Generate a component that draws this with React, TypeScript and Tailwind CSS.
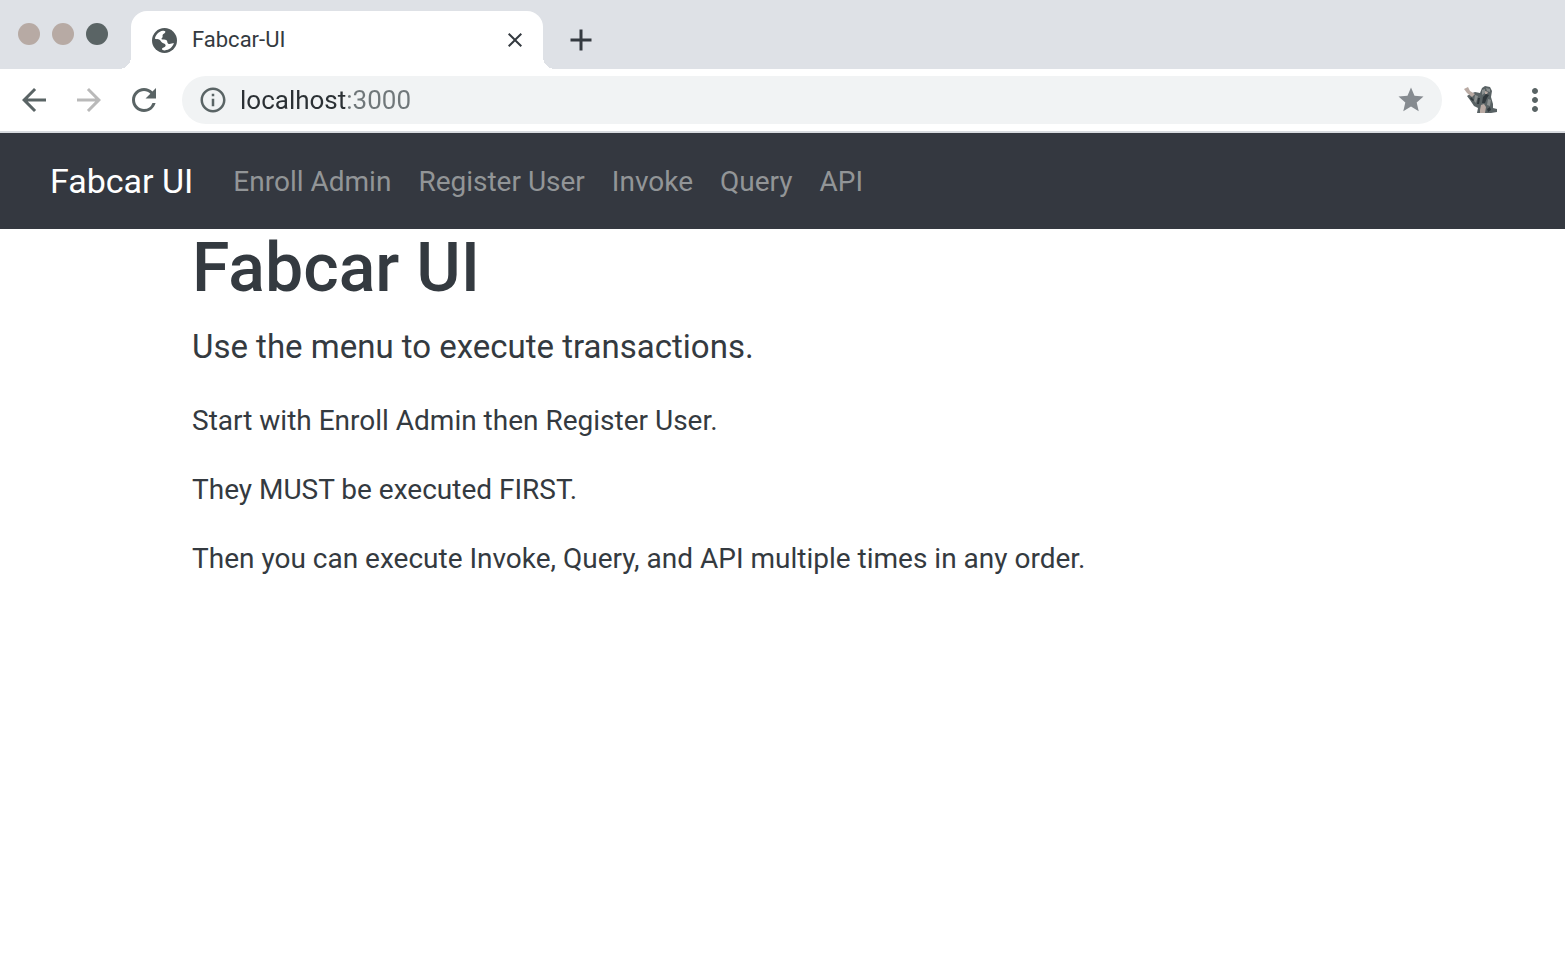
import {
  MdAdd,
  MdArrowBack,
  MdArrowForward,
  MdClose,
  MdInfoOutline,
  MdMoreVert,
  MdRefresh,
  MdStar,
} from "react-icons/md";

const links = ["Enroll Admin", "Register User", "Invoke", "Query", "API"];

function Globe() {
  return (
    <svg viewBox="0 0 24 24" className="size-[25px]" aria-hidden="true">
      <circle cx="12" cy="12" r="12" fill="#4f5759" />
      <path
        fill="#fff"
        d="M2.800 10.300C3.300 6.500 6.500 3.200 10.500 2.600 12.500 2.400 13.300 3.200 12.600 4.400 12 5.400 10.600 5.600 10.200 6.800 9.900 8 10.700 8.300 9.800 9.300 9.300 9.900 8.700 10.100 9.200 10.700 10.200 11.300 12.800 10.700 14 11.700 15.200 12.900 14.300 14.300 15.600 15.100 17.200 15.900 19.300 14.700 21 14.500 20 18.500 16.300 21.300 12.200 21.500 10.600 21.500 9.400 21 9.600 20 9.900 18.600 12.300 18.800 13 17.300 13.600 15.700 11.800 14.700 10.300 14.300 8.700 13.800 8.600 12.200 7.200 11.300 5.800 10.500 4.300 10.800 2.800 10.300z"
      />
    </svg>
  );
}

function ExtensionIcon() {
  return (
    <svg viewBox="0 0 34 30" className="h-[30px] w-[34px]" aria-hidden="true">
      <path fill="#596264" d="M7 9l5-2 5 1 2-5 3-2 5 1 2 4-1 6 2 7 0 4 4 1 0 3-6 1H14l1-5-4-2-4-6-3-4z" />
      <path fill="#b9aaa3" d="M1 4l4-2 2 4 5 3-3 3-5-4z" />
      <path fill="#8b9090" d="M12 10l3 1-2 7-2-2zM19 5l3-1 0 4-3 2zM23 3l4 1 0 3-3-1zM25 14l3 1-1 6-3-1z" />
      <path fill="#30383c" d="M15 13l2 0-1 6-2 0zM20 12l3-3 3 1-2 3-2 5-3 0zM24 24l3-2 1 3-3 2zM8 12l3 3-1 1-3-2z" />
      <path fill="#b9aaa3" d="M18 20l3-1 2 3-1 6h-5l0-3zM22 6l3 1-1 2-2 0z" />
    </svg>
  );
}

export default function App() {
  return (
    <div className="flex min-h-screen flex-col bg-white font-['Roboto',sans-serif] text-[#343a40]">
      <div className="flex h-[69px] items-end bg-[#dee1e6]">
        <div className="flex h-full w-[131px] shrink-0 gap-3 pt-[23px] pl-[18px]">
          <button aria-label="Close window" className="size-[22px] rounded-full bg-[#b7aaa4]" />
          <button aria-label="Minimize window" className="size-[22px] rounded-full bg-[#b7aaa4]" />
          <button aria-label="Zoom window" className="size-[22px] rounded-full bg-[#5a6465]" />
        </div>
        <div className="relative flex h-[58px] w-[412px] items-center rounded-t-2xl bg-white pr-4 pl-[21px]">
          <span className="absolute bottom-0 -left-3 size-3 bg-[radial-gradient(circle_at_0_0,#dee1e6_12px,#fff_12px)]" />
          <span className="absolute -right-3 bottom-0 size-3 bg-[radial-gradient(circle_at_100%_0,#dee1e6_12px,#fff_12px)]" />
          <Globe />
          <span className="ml-[15px] flex-1 text-[22px] leading-8">Fabcar-UI</span>
          <button aria-label="Close tab"><MdClose className="size-6" /></button>
        </div>
        <button aria-label="New tab" className="ml-5 flex h-[58px] items-center">
          <MdAdd className="size-9" />
        </button>
      </div>
      <div className="flex h-16 items-center border-b-2 border-[#d7dadf] pr-3 pl-4 text-[#5a6465]">
        <div className="flex gap-[19px]">
          <button aria-label="Back"><MdArrowBack className="size-9" /></button>
          <button aria-label="Forward" className="text-[#b9b9b9]"><MdArrowForward className="size-9" /></button>
          <button aria-label="Reload"><MdRefresh className="size-9" /></button>
        </div>
        <div className="ml-5 flex h-12 flex-1 items-center rounded-full bg-[#f1f3f4] px-4">
          <MdInfoOutline className="size-[30px]" />
          <input
            aria-label="Address"
            defaultValue="localhost:3000"
            className="ml-3 h-10 min-w-0 flex-1 bg-[linear-gradient(90deg,#2b3034_106px,#70777a_106px)] bg-clip-text text-[26px] text-transparent caret-[#2b3034] outline-none"
          />
          <button aria-label="Bookmark" className="text-[#868b90]"><MdStar className="size-[30px]" /></button>
        </div>
        <button aria-label="Extension" className="ml-[21px]"><ExtensionIcon /></button>
        <button aria-label="Menu" className="ml-5"><MdMoreVert className="size-9" /></button>
      </div>
      <nav className="flex h-24 items-center bg-[#343840] pl-[50px]">
        <a href="#" className="mr-10 text-[34px] text-white">Fabcar UI</a>
        <div className="flex gap-[27px] pt-[2px] text-[28px] text-[#929597]">
          {links.map((label) => (
            <a key={label} href="#">{label}</a>
          ))}
        </div>
      </nav>
      <main className="mx-auto w-full max-w-[1233px] px-[26px]">
        <h1 className="text-[68px] leading-[78px] font-medium">Fabcar UI</h1>
        <p className="mt-[14px] text-[33px] leading-[51px]">Use the menu to execute transactions.</p>
        <div className="mt-7 flex flex-col gap-[27px] text-[28px] leading-[42px]">
          <p>Start with Enroll Admin then Register User.</p>
          <p>They MUST be executed FIRST.</p>
          <p>Then you can execute Invoke, Query, and API multiple times in any order.</p>
        </div>
      </main>
    </div>
  );
}
